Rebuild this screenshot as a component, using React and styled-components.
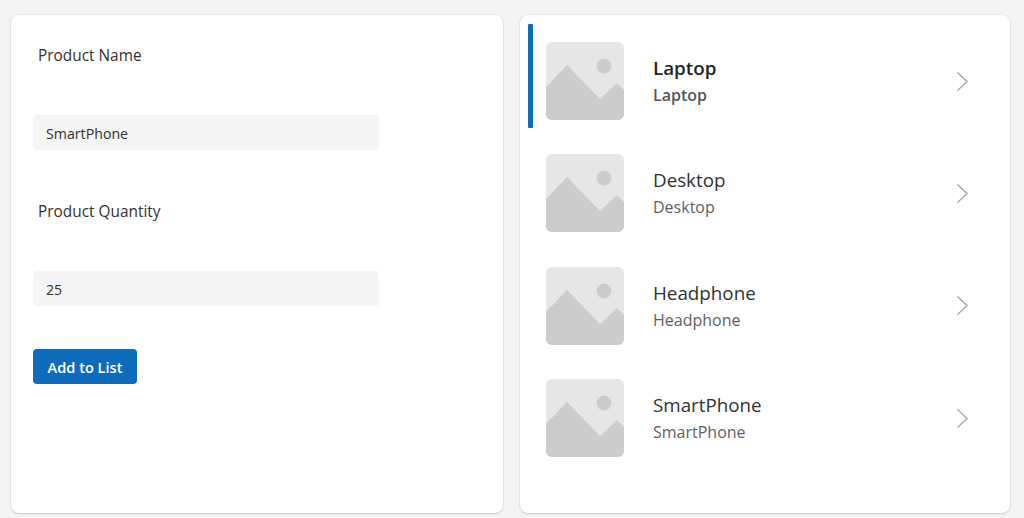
import React from "react";
import styled, { createGlobalStyle } from "styled-components";

const Global = createGlobalStyle`
  html, body { margin: 0; padding: 0; background: #f4f4f4; }
  body { font-family: "Open Sans", "Noto Sans", "Liberation Sans", sans-serif; }
`;
const Page = styled.div`
  width: 1024px; height: 518px; box-sizing: border-box; overflow: hidden;
  padding: 15px 14px 5px 11px; display: grid; grid-template-columns: 492px 490px; gap: 17px;
`;
const Card = styled.section`
  background: #fff; border-radius: 8px;
  box-shadow: 0 0 2px rgba(0,0,0,.12), 0 1px 2px rgba(0,0,0,.14);
`;
const FormCard = styled(Card)`padding: 30px 0 0 22px;`;
const Label = styled.div`
  font-size: 15.4px; line-height: 22px; color: #323130; padding-left: 5px;
`;
const Input = styled.div`
  width: 346px; height: 35px; box-sizing: border-box; margin: 48px 0 51px; padding: 2px 0 0 13px;
  background: #f4f4f4; border-radius: 4px; display: flex; align-items: center;
  font-size: 14.2px; color: #323130;
`;
const Button = styled.button`
  display: block; width: 104px; height: 35px; margin-top: -8px; padding: 1px 0 0; border: 0; border-radius: 4px;
  background: #0f6cbd; color: #fff; font: 600 14.6px "Open Sans", sans-serif;
`;
const ListCard = styled(Card)`padding: 9px 0 0 8px;`;
const Row = styled.div`
  height: 104px; box-sizing: border-box; margin-bottom: 8.45px; display: flex; align-items: center; position: relative;
  padding: 10px 41px 0 18px; color: #323130;
`;
const Bar = styled.span`
  position: absolute; left: 0; top: 0; bottom: 0; width: 5px; background: #0f6cbd; border-radius: 1px;
`;
const Thumb = styled.svg`width: 78px; height: 78px; flex: none; border-radius: 6px;`;
const Text = styled.div`margin: -1.4px 0 0 29px; flex: 1; min-width: 0;`;
const Title = styled.div`
  font-size: 18.8px; line-height: 26px; font-weight: ${p => (p.$active ? 600 : 400)};
  color: ${p => (p.$active ? "#242424" : "#323130")};
`;
const Sub = styled.div`
  font-size: 16px; line-height: 22px; margin-top: 3px; font-weight: ${p => (p.$active ? 600 : 400)};
  color: ${p => (p.$active ? "#555" : "#616161")};
`;
const Chevron = styled.svg`width: 13px; height: 22px; flex: none; margin-top: 1px;`;

const Placeholder = () => (
  <Thumb viewBox="0 0 78 78">
    <rect width="78" height="78" fill="#e6e6e6" />
    <circle cx="58" cy="24" r="7.4" fill="#cccccb" />
    <path d="M0 45 L21 23 L54 57 L71 41 L78 48 V78 H0 Z" fill="#cccccb" />
  </Thumb>
);

const items = ["Laptop", "Desktop", "Headphone", "SmartPhone"];

export default function App() {
  return (
    <>
      <Global />
      <Page>
        <FormCard>
          <Label>Product Name</Label>
          <Input>SmartPhone</Input>
          <Label>Product Quantity</Label>
          <Input>25</Input>
          <Button>Add to List</Button>
        </FormCard>
        <ListCard>
          {items.map((name, i) => (
            <Row key={name}>
              {i === 0 && <Bar />}
              <Placeholder />
              <Text>
                <Title $active={i === 0}>{name}</Title>
                <Sub $active={i === 0}>{name}</Sub>
              </Text>
              <Chevron viewBox="0 0 13 22">
                <path d="M1.5 1.5 L11 10.5 L1.5 19.5" fill="none" stroke="#a8a8a8" strokeWidth="1.4" />
              </Chevron>
            </Row>
          ))}
        </ListCard>
      </Page>
    </>
  );
}
